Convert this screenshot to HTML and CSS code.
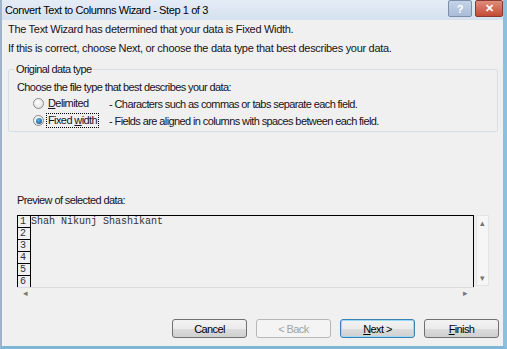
FILE: index.html
```html
<!DOCTYPE html>
<html>
<head>
<title>Convert Text to Columns Wizard - Step 1 of 3</title>
<link rel="stylesheet" href="styles.css">
</head>
<body>

<div class="win">
	<div class="titlebar">
		<span class="title">Convert Text to Columns Wizard - Step 1 of 3</span>
		<span class="capbtn help">?</span>
		<span class="capbtn close">&#x2715;</span>
	</div>

	<div class="content">
		<p class="line">The Text Wizard has determined that your data is Fixed Width.</p>
		<p class="line">If this is correct, choose Next, or choose the data type that best describes your data.</p>

		<fieldset class="grp">
			<legend>Original data type</legend>
			<div class="grpcap">Choose the file type that best describes your data:</div>
			<div class="opt">
				<span class="radio"></span>
				<span class="optname"><span class="lbl"><u>D</u>elimited</span></span>
				<span class="optdesc">- Characters such as commas or tabs separate each field.</span>
			</div>
			<div class="opt">
				<span class="radio on"></span>
				<span class="optname"><span class="lbl focus">Fixed <u>w</u>idth</span></span>
				<span class="optdesc">- Fields are aligned in columns with spaces between each field.</span>
			</div>
		</fieldset>

		<div class="prevcap">Preview of selected data:</div>
		<div class="preview">
			<div class="prevbox">
				<div class="nums">
					<div class="num">1</div>
					<div class="num">2</div>
					<div class="num">3</div>
					<div class="num">4</div>
					<div class="num">5</div>
					<div class="num">6</div>
				</div>
				<div class="data">
					<div class="row">Shah Nikunj Shashikant</div>
				</div>
			</div>
			<div class="vscroll">
				<span class="arr">&#x25B4;</span>
				<span class="arr">&#x25BE;</span>
			</div>
		</div>
		<div class="hscroll">
			<span class="arr">&#x25C2;</span>
			<span class="arr">&#x25B8;</span>
		</div>

		<div class="buttons">
			<span class="btn">Cancel</span>
			<span class="btn off">&lt; Back</span>
			<span class="btn def"><u>N</u>ext &gt;</span>
			<span class="btn"><u>F</u>inish</span>
		</div>
	</div>
</div>

</body>
</html>
```

FILE: styles.css
```css
body {
	margin: 0;
	padding: 0;
	background-color: #f0f0f0;
	font-family: "Liberation Sans", Arial, sans-serif;
	font-size: 11px;
	letter-spacing: -0.6px;
	color: #1a1020;
}

.win {
	width: 507px;
	height: 349px;
	box-sizing: border-box;
	overflow: hidden;
	background-color: #f0f0f0;
	border-left: 2px solid #9fb4c8;
	border-right: 4px solid #8cc0df;
	border-bottom: 3px solid #7fb6d8;
}

/* caption */

.titlebar {
	height: 20px;
	display: flex;
	align-items: center;
	background: linear-gradient(#e4ecf6, #d6e2f0);
	padding-left: 3px;
}

.title {
	flex: 1;
	font-size: 11px;
	letter-spacing: -0.4px;
	color: #000;
}

.capbtn {
	height: 15px;
	margin-top: -3px;
	display: flex;
	align-items: center;
	justify-content: center;
	font-size: 11px;
	font-weight: bold;
	letter-spacing: 0;
	border: 1px solid #7d8fa8;
	border-radius: 2px;
}

.help {
	width: 22px;
	margin-right: 3px;
	color: #fff;
	background: linear-gradient(#c4d3e8, #a9bcd8);
}

.close {
	width: 26px;
	color: #fff;
	border-color: #8c3a30;
	background: linear-gradient(#e08c7c, #c54b36);
}

/* body */

.content {
	padding: 0 4px 0 6px;
}

.line {
	margin: 0;
	line-height: 19px;
	letter-spacing: -0.3px;
}

.grp {
	margin: 4px 0 0 0;
	padding: 0 0 2px 8px;
	width: 490px;
	box-sizing: border-box;
	border: 1px solid #d5dfe5;
	border-radius: 2px;
}

.grp legend {
	padding: 0 2px;
	margin-left: -3px;
	line-height: 14px;
}

.grpcap {
	line-height: 16px;
	margin-top: 3px;
}

.opt {
	display: flex;
	align-items: center;
	height: 17px;
	padding-left: 16px;
}

.radio {
	width: 11px;
	height: 11px;
	border-radius: 50%;
	border: 1px solid #8a8a8a;
	background: radial-gradient(circle at 40% 35%, #ffffff, #d9d9d9);
	margin-right: 2px;
	box-sizing: border-box;
	display: flex;
	align-items: center;
	justify-content: center;
}

.radio.on::after {
	content: "";
	width: 6px;
	height: 6px;
	border-radius: 50%;
	background: radial-gradient(circle at 40% 35%, #58b5e8, #10457a);
}

.optname {
	width: 63px;
	flex-shrink: 0;
}

.lbl {
	display: inline-block;
	padding: 0 1px;
	line-height: 13px;
	border: 1px solid transparent;
}

.focus {
	border: 1px dotted #000;
}

.prevcap {
	margin-top: 60px;
	padding-left: 9px;
	line-height: 16px;
}

.preview {
	margin: 7px 0 0 9px;
	display: flex;
	align-items: flex-start;
}

.prevbox {
	width: 457px;
	height: 72px;
	box-sizing: border-box;
	overflow: hidden;
	display: flex;
	border-top: 1px solid #000;
	border-right: 1px solid #000;
	border-left: 1px solid #000;
}

.nums {
	width: 12px;
	border-right: 1px solid #000;
	flex-shrink: 0;
}

.num {
	height: 12px;
	box-sizing: border-box;
	border-bottom: 1px solid #000;
	font-family: "Liberation Mono", monospace;
	font-size: 10px;
	letter-spacing: 0;
	line-height: 11px;
	padding-left: 2px;
	color: #333;
}

.data {
	flex: 1;
	font-family: "Liberation Mono", monospace;
	font-size: 10px;
	letter-spacing: 0;
	color: #333;
}

.row {
	line-height: 12px;
	height: 12px;
}

.vscroll {
	width: 13px;
	height: 71px;
	margin-left: 2px;
	box-sizing: border-box;
	border: 1px solid #e4e4e4;
	background-color: #f6f6f6;
	display: flex;
	flex-direction: column;
	justify-content: space-between;
	align-items: center;
	padding: 3px 0 2px;
}

.arr {
	font-size: 9px;
	line-height: 9px;
	letter-spacing: 0;
	color: #777;
}

.hscroll {
	width: 457px;
	height: 11px;
	margin-left: 9px;
	box-sizing: border-box;
	border-top: 1px solid #dcdcdc;
	display: flex;
	justify-content: space-between;
	align-items: center;
	padding: 0 6px;
}

.buttons {
	margin-top: 21px;
	display: flex;
	justify-content: flex-end;
	gap: 9px;
}

.btn {
	width: 75px;
	height: 19px;
	box-sizing: border-box;
	display: flex;
	align-items: center;
	justify-content: center;
	border: 1px solid #707070;
	border-radius: 3px;
	background: linear-gradient(#f3f3f3 0%, #ebebeb 50%, #dcdcdc 51%, #d0d0d0 100%);
	color: #000;
}

.btn.off {
	border-color: #b5b8ba;
	background: #f4f4f4;
	color: #a2a2a2;
}

.btn.def {
	border-color: #3c7fb1;
	box-shadow: inset 0 0 0 1px #9ad8f4;
}
```
